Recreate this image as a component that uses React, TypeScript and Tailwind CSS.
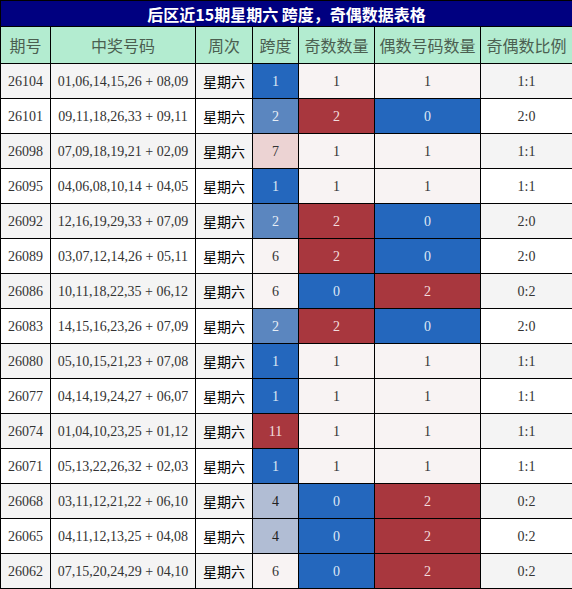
const rows: [string, string, number, number, number, string][] = [
  ["26104", "01,06,14,15,26 + 08,09", 1, 1, 1, "1:1"],
  ["26101", "09,11,18,26,33 + 09,11", 2, 2, 0, "2:0"],
  ["26098", "07,09,18,19,21 + 02,09", 7, 1, 1, "1:1"],
  ["26095", "04,06,08,10,14 + 04,05", 1, 1, 1, "1:1"],
  ["26092", "12,16,19,29,33 + 07,09", 2, 2, 0, "2:0"],
  ["26089", "03,07,12,14,26 + 05,11", 6, 2, 0, "2:0"],
  ["26086", "10,11,18,22,35 + 06,12", 6, 0, 2, "0:2"],
  ["26083", "14,15,16,23,26 + 07,09", 2, 2, 0, "2:0"],
  ["26080", "05,10,15,21,23 + 07,08", 1, 1, 1, "1:1"],
  ["26077", "04,14,19,24,27 + 06,07", 1, 1, 1, "1:1"],
  ["26074", "01,04,10,23,25 + 01,12", 11, 1, 1, "1:1"],
  ["26071", "05,13,22,26,32 + 02,03", 1, 1, 1, "1:1"],
  ["26068", "03,11,12,21,22 + 06,10", 4, 0, 2, "0:2"],
  ["26065", "04,11,12,13,25 + 04,08", 4, 0, 2, "0:2"],
  ["26062", "07,15,20,24,29 + 04,10", 6, 0, 2, "0:2"],
];

const spanCls: Record<number, string> = {
  1: "bg-[#2467bd] text-[#dfe8f4]",
  2: "bg-[#5b86bf] text-[#e8eef6]",
  4: "bg-[#b1bdd4] text-[#222]",
  6: "bg-[#f8f3f3] text-[#333]",
  7: "bg-[#ecd3d3] text-[#333]",
  11: "bg-[#a8373e] text-[#f3dede]",
};

const countCls: Record<number, string> = {
  0: "bg-[#2467bd] text-[#dfe8f4]",
  1: "bg-[#f8f3f3] text-[#333]",
  2: "bg-[#a8373e] text-[#f3dede]",
};

const headers = ["期号", "中奖号码", "周次", "跨度", "奇数数量", "偶数号码数量", "奇偶数比例"];
const widths = ["w-[50px]", "w-[145px]", "w-[57px]", "w-[46px]", "w-[76px]", "w-[106px]", "w-[92px]"];

const cjk = "font-['Noto_Sans_CJK_SC','Noto_Sans',sans-serif]";
const serif = "font-['Liberation_Serif','Noto_Sans_CJK_SC',serif]";

export default function App() {
  return (
    <div className="w-[572px] bg-white">
      <table className="w-[572px] table-fixed border-collapse">
        <colgroup>
          {widths.map((w, i) => (
            <col key={i} className={w} />
          ))}
        </colgroup>
        <thead>
          <tr className="h-[26px]">
            <th
              colSpan={7}
              className={`border border-black bg-[#000080] text-center text-[16px] font-bold leading-none text-white ${cjk}`}
            >
              后区近15期星期六 跨度，奇偶数据表格
            </th>
          </tr>
          <tr className="h-[37px]">
            {headers.map((h) => (
              <th
                key={h}
                className={`border border-black bg-[#b3ecd0] text-center text-[16px] font-normal text-[#4b5f50] ${cjk}`}
              >
                {h}
              </th>
            ))}
          </tr>
        </thead>
        <tbody>
          {rows.map(([no, nums, span, odd, even, ratio], i) => {
            const bg = i % 2 === 0 ? "bg-[#f4f4f4]" : "bg-white";
            return (
              <tr key={no} className="h-[35px] text-center">
                <td className={`border border-black ${bg} text-[14px] text-[#333] ${serif}`}>{no}</td>
                <td className={`border border-black ${bg} text-[14px] text-[#333] ${serif}`}>{nums}</td>
                <td className={`border border-black ${bg} text-[14px] text-black ${cjk}`}>星期六</td>
                <td className={`border border-black text-[14px] ${spanCls[span]} ${serif}`}>{span}</td>
                <td className={`border border-black text-[14px] ${countCls[odd]} ${serif}`}>{odd}</td>
                <td className={`border border-black text-[14px] ${countCls[even]} ${serif}`}>{even}</td>
                <td className={`border border-black ${bg} text-[14px] text-[#333] ${serif}`}>{ratio}</td>
              </tr>
            );
          })}
        </tbody>
      </table>
    </div>
  );
}
